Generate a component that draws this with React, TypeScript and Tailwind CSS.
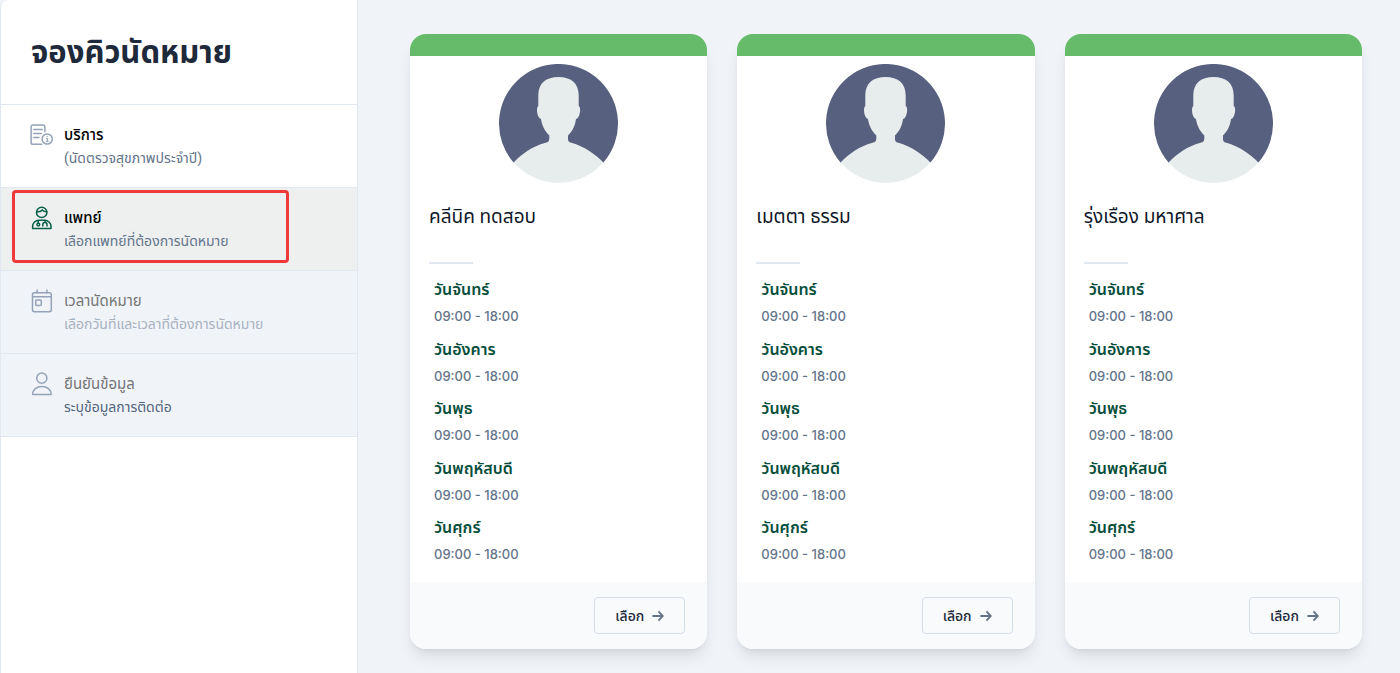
import type { ReactNode } from 'react';

type Step = {
    title: string;
    detail: string;
    icon: ReactNode;
    state: 'done' | 'current' | 'pending' | 'last';
};

const ServiceIcon = () => (
    <svg viewBox="0 0 24 24" className="size-6" fill="none" stroke="currentColor" strokeWidth="1.5" strokeLinecap="round" strokeLinejoin="round" aria-hidden="true">
        <path d="M11.7 21.3H3A1.9 1.9 0 0 1 1.1 19.4V3.9A1.9 1.9 0 0 1 3 2H13A1.9 1.9 0 0 1 14.9 3.9V8.7" />
        <path d="M3.8 6.5H12.2M3.8 10.5H11.5M3.8 14.5H9" />
        <circle cx="17.2" cy="16" r="5.1" />
        <path d="M16.5 15.5H17.3V18.5M16.4 18.5H18.2M17.1 13.4V13.5" strokeWidth="1.2" />
    </svg>
);

const DoctorIcon = () => (
    <svg viewBox="0 0 24 24" className="size-6" fill="none" stroke="currentColor" strokeWidth="1.5" strokeLinecap="round" strokeLinejoin="round" aria-hidden="true">
        <circle cx="11.7" cy="6.4" r="5.2" />
        <path d="M6.8 5.8C8.9 6 10.9 5.4 12.3 3.9C13.4 5.3 15 5.9 16.8 5.8" />
        <path d="M2.6 22.5V20.6A6.4 6.4 0 0 1 9 14.2H14.6A6.4 6.4 0 0 1 21 20.6V22.5Z" />
        <path d="M8.2 14.5V17" />
        <circle cx="8.3" cy="18.6" r="1.4" />
        <path d="M15 14.4V16.5M12.8 20V18.7A2.1 2.1 0 0 1 17 18.7V20" />
    </svg>
);

const CalendarIcon = () => (
    <svg viewBox="0 0 24 24" className="size-6" fill="none" stroke="currentColor" strokeWidth="1.5" strokeLinecap="round" strokeLinejoin="round" aria-hidden="true">
        <rect x="2.5" y="3.7" width="18.8" height="19" rx="1.9" />
        <path d="M2.5 7.7H21.3M7.1 1V3.7M16.9 1V3.7" />
        <rect x="5.7" y="11" width="5.6" height="5.4" rx="1" />
    </svg>
);

const PersonIcon = () => (
    <svg viewBox="0 0 24 24" className="size-6" fill="none" stroke="currentColor" strokeWidth="1.5" strokeLinecap="round" strokeLinejoin="round" aria-hidden="true">
        <circle cx="11.8" cy="6.2" r="5.1" />
        <path d="M2.6 22.5C2.6 17.5 6.7 14.4 11.9 14.4C17.1 14.4 21.2 17.5 21.2 22.5Z" />
    </svg>
);

const steps: Step[] = [
    { title: 'บริการ', detail: '(นัดตรวจสุขภาพประจำปี)', icon: <ServiceIcon />, state: 'done' },
    { title: 'แพทย์', detail: 'เลือกแพทย์ที่ต้องการนัดหมาย', icon: <DoctorIcon />, state: 'current' },
    { title: 'เวลานัดหมาย', detail: 'เลือกวันที่และเวลาที่ต้องการนัดหมาย', icon: <CalendarIcon />, state: 'pending' },
    { title: 'ยืนยันข้อมูล', detail: 'ระบุข้อมูลการติดต่อ', icon: <PersonIcon />, state: 'last' },
];

const stepStyles = {
    done: { row: 'bg-white', icon: 'text-[#94a3b8]', title: 'font-medium text-black', detail: 'text-[#64748b]' },
    current: { row: 'bg-[#eef0f0]', icon: 'text-[#065f46]', title: 'font-medium text-black', detail: 'text-[#64748b]' },
    pending: { row: 'bg-[#f0f4f9]', icon: 'text-[#94a3b8]', title: 'text-[#757575]', detail: 'text-[#a8b2c1]' },
    last: { row: 'bg-[#f0f4f9]', icon: 'text-[#94a3b8]', title: 'text-[#757575]', detail: 'text-[#52647d]' },
};

const doctors = ['คลีนิค ทดสอบ', 'เมตตา ธรรม', 'รุ่งเรือง มหาศาล'];

const schedule = [
    { day: 'วันจันทร์', time: '09:00 - 18:00' },
    { day: 'วันอังคาร', time: '09:00 - 18:00' },
    { day: 'วันพุธ', time: '09:00 - 18:00' },
    { day: 'วันพฤหัสบดี', time: '09:00 - 18:00' },
    { day: 'วันศุกร์', time: '09:00 - 18:00' },
];

// The light disc is the person, the dark path is the backdrop cut around it
const Avatar = () => (
    <svg viewBox="0 0 119 119" className="size-[119px]" aria-hidden="true">
        <circle cx="59.5" cy="59.5" r="59.3" fill="#e7ecec" />
        <path
            fill="#57607f"
            d="M59.5 13C47 13 39.5 19 39.3 31V42C37 43 37.8 54 42 55C43 62 46 67 50.3 71.5V74C50.3 77 49.5 78 46.5 78.8C33 82.5 23 90 14.6 98.5A59.5 59.5 0 1 1 104.4 98.5C96 90 85 82.5 72.5 78.8C69.5 78 69 77 69 74V71.5C73.5 67 76 62 77 55C81 54 82.5 43 79.7 42V31C79.5 19 72 13 59.5 13Z"
        />
    </svg>
);

const DoctorCard = ({ name }: { name: string }) => (
    <article className="flex flex-col overflow-hidden rounded-2xl bg-white shadow-lg">
        <div className="h-[22px] bg-[#66bb6a]" />
        <div className="flex justify-center pt-2">
            <Avatar />
        </div>
        <div className="px-[19px] pt-5">
            <h2 className="text-[19px] leading-7 text-[#0f172a]">{name}</h2>
            <div className="mt-[31px] h-[2px] w-11 bg-[#e2e8f0]" />
        </div>
        <ul className="grid min-h-[310px] auto-rows-fr px-6 pt-3">
            {schedule.map((slot) => (
                <li key={slot.day}>
                    <p className="text-base leading-7 font-semibold text-[#064e3b]">{slot.day}</p>
                    <p className="font-[Inter] text-[13px] leading-6 font-medium text-[#64748b]">{slot.time}</p>
                </li>
            ))}
        </ul>
        <div className="mt-2 flex justify-end bg-[#f8fafc] px-[22px] py-[15px]">
            <button type="button" className="flex h-[37px] w-[91px] items-center justify-center gap-2 rounded border border-[#d5dde8] text-sm font-medium text-[#1e293b]">
                เลือก
                <svg viewBox="0 0 14 14" className="size-3 text-[#64748b]" fill="none" stroke="currentColor" strokeWidth="2.2" aria-hidden="true">
                    <path d="M0.5 7H12M7.5 1.7L12.6 7L7.5 12.3" />
                </svg>
            </button>
        </div>
    </article>
);

const App = () => {
    return (
        <div className="flex min-h-screen bg-[#f0f4f9] font-['Roboto','Noto_Sans_Thai','Noto_Sans',sans-serif]">
            <aside className="w-[358px] shrink-0 rounded-tl-lg border-x border-[#e2e8f0] bg-white">
                <h1 className="border-b border-[#e2e8f0] px-[30px] pt-[33px] pb-[31px] text-[31px] leading-10 font-bold text-[#1e293b]">จองคิวนัดหมาย</h1>
                <ol>
                    {steps.map((step) => (
                        <li key={step.title} className={`relative flex h-[83px] gap-[10px] border-b border-[#e2e8f0] pt-[18px] pl-[29px] ${stepStyles[step.state].row}`}>
                            <span className={stepStyles[step.state].icon}>{step.icon}</span>
                            <div>
                                <p className={`text-[15px] leading-6 ${stepStyles[step.state].title}`}>{step.title}</p>
                                <p className={`text-sm leading-[22px] ${stepStyles[step.state].detail}`}>{step.detail}</p>
                            </div>
                            {step.state === 'current' && (
                                <span className="pointer-events-none absolute top-[2px] left-[11px] h-[73px] w-[277px] rounded border-3 border-[#f03a3a]" />
                            )}
                        </li>
                    ))}
                </ol>
            </aside>
            <main className="grid flex-1 grid-cols-3 items-start gap-[30px] pt-[34px] pr-[38px] pb-6 pl-[52px]">
                {doctors.map((name) => (
                    <DoctorCard key={name} name={name} />
                ))}
            </main>
        </div>
    );
};

export default App;
